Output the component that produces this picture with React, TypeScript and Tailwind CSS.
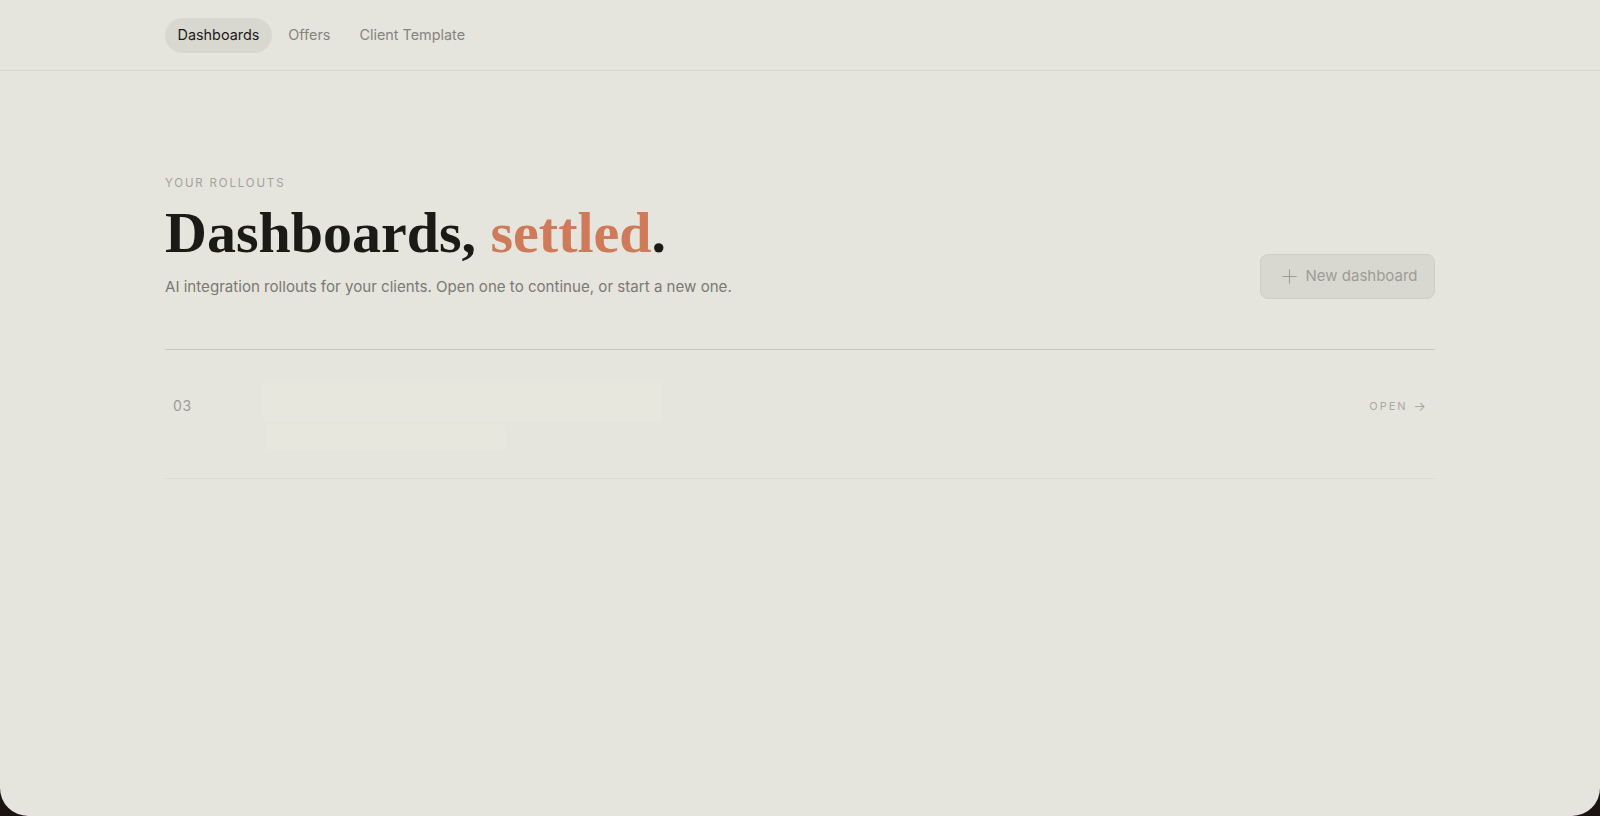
import React from "react";
import { Plus } from "lucide-react";

const navItems = ["Dashboards", "Offers", "Client Template"];

const sans = "font-['Inter','Noto_Sans',sans-serif]";
const serif = "font-['Liberation_Serif','Times_New_Roman',serif]";

const rows = [{ id: "03" }];

const App = () => {
  const [active, setActive] = React.useState("Dashboards");

  return (
    <div className={`min-h-screen w-full bg-[#1c1411] ${sans}`}>
      <div className="flex h-[816px] w-full flex-col rounded-b-[28px] bg-[#e6e5dd]">
        {/* top nav */}
        <header className="h-[71px] border-b border-[#d9d8d0]">
          <nav className="mx-auto flex h-full max-w-[1270px] items-center gap-[4px]">
            {navItems.map((item) => (
              <button
                key={item}
                onClick={() => setActive(item)}
                className={`h-[35px] rounded-full px-[12.5px] text-[14.4px] ${
                  active === item
                    ? "bg-[#d9d8d0] text-[#1b1b18]"
                    : "text-[#85847d]"
                }`}
              >
                {item}
              </button>
            ))}
          </nav>
        </header>

        <main className="mx-auto w-full max-w-[1270px] pt-[104px]">
          <div className="flex items-end justify-between pb-[50px]">
            <div>
              <p className="text-[11.5px] leading-[16px] tracking-[0.16em] text-[#a3a29b]">
                YOUR ROLLOUTS
              </p>
              <h1
                className={`${serif} mt-[10px] text-[58px] leading-[64px] font-bold text-[#1a1a17]`}
              >
                Dashboards, <span className="text-[#cf7a5a]">settled</span>.
              </h1>
              <p className="mt-[10px] text-[15.1px] leading-[24px] text-[#7a7973]">
                AI integration rollouts for your clients. Open one to continue,
                or start a new one.
              </p>
            </div>
            <button
              disabled
              className="mb-[0px] flex h-[45px] w-[175px] items-center justify-center gap-[5px] rounded-[8px] border border-[#cfcec6] bg-[#d9d8d0] text-[15px] text-[#9d9c95]"
            >
              <Plus className="size-[23px]" strokeWidth={1.1} />
              New dashboard
            </button>
          </div>

          <div className="border-t-[1.5px] border-[#c9c8c0]">
            {rows.map((row) => (
              <div
                key={row.id}
                className="flex items-start border-b border-[#dcdbd3] pt-[30px] pb-[28px]"
              >
                <span className="w-[98px] pt-[16px] pl-[8px] text-[14px] leading-[20px] tracking-[0.04em] text-[#9c9b94]">
                  {row.id}
                </span>
                <div className="flex flex-1 flex-col gap-[2px]">
                  <div className="h-[42px] w-[400px] rounded-[3px] bg-[#e8e7de]" />
                  <div className="ml-[4px] h-[26px] w-[238px] rounded-[3px] bg-[#e8e7de]" />
                </div>
                <a
                  href="#"
                  className="flex items-center gap-[6px] pt-[17px] pr-[9px] text-[11px] leading-[18px] tracking-[0.18em] text-[#a9a8a1]"
                >
                  OPEN
                  <span className="text-[13px] tracking-normal">→</span>
                </a>
              </div>
            ))}
          </div>
        </main>
      </div>
    </div>
  );
};

export default App;
